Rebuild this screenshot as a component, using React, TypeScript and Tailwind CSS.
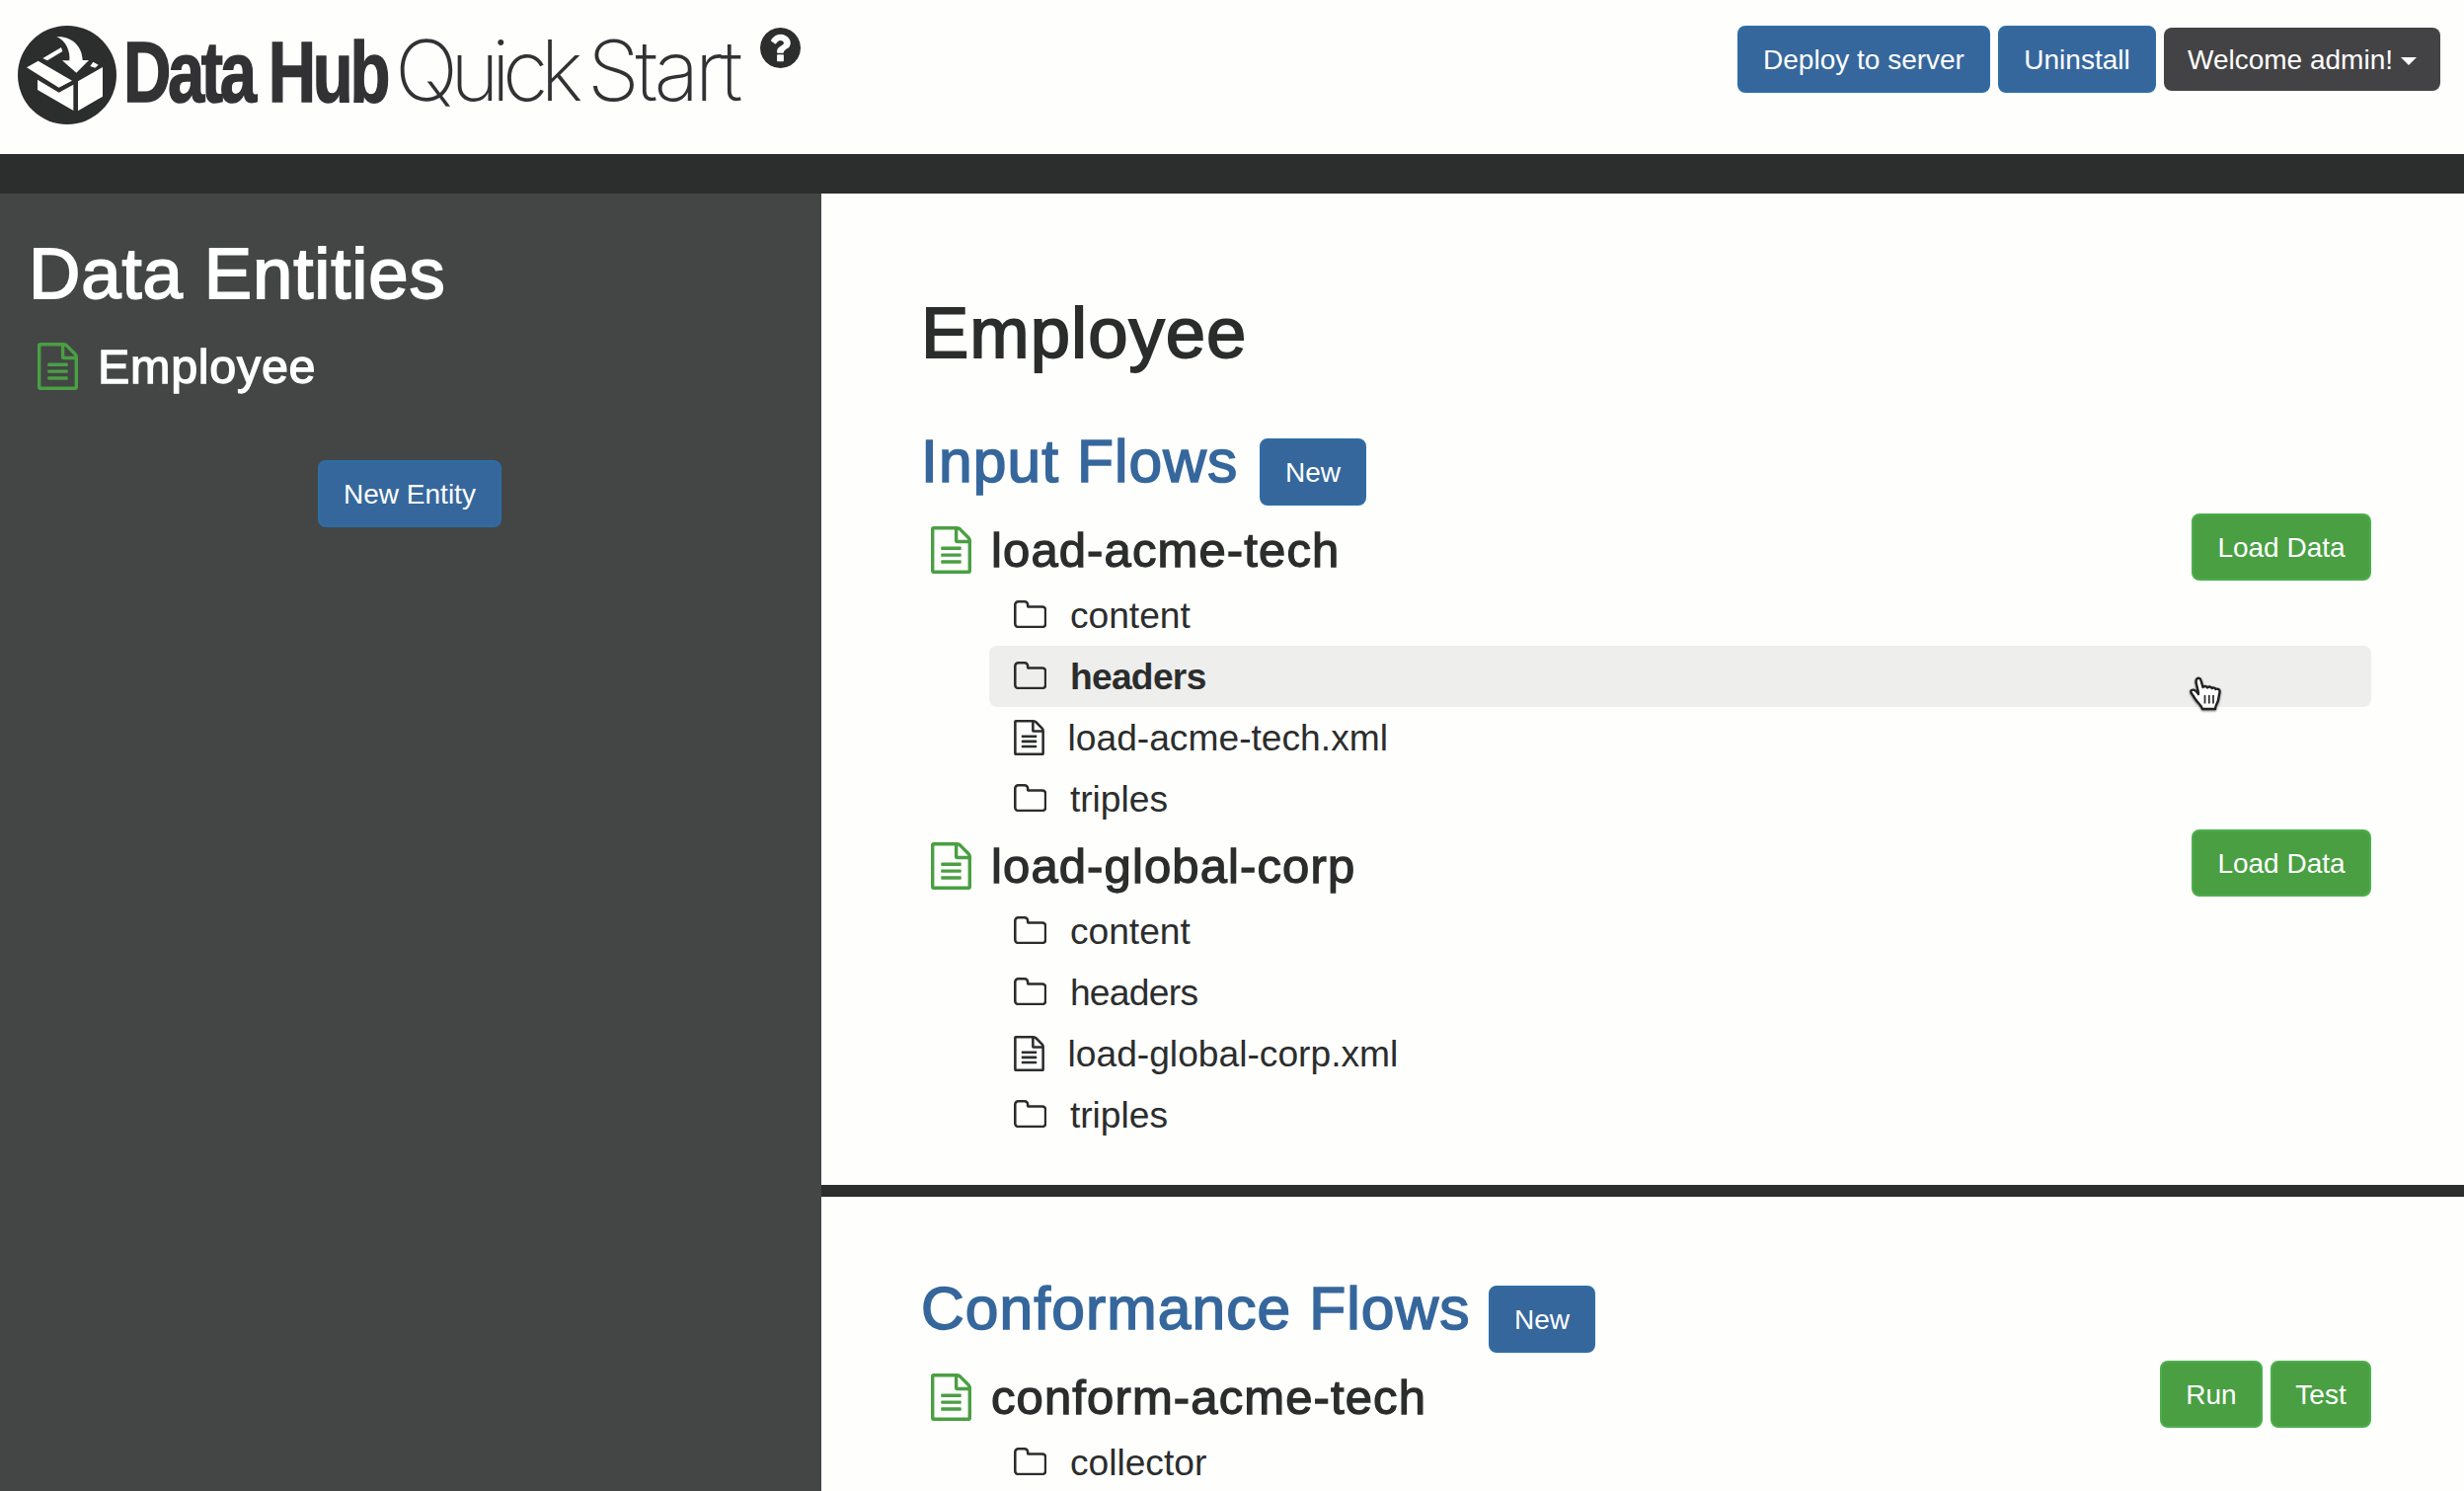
import type { ReactNode } from "react";

const FILE_PATH =
  "M1596 380q28 28 48 76t20 88v1152q0 40-28 68t-68 28h-1344q-40 0-68-28t-28-68v-1600q0-40 28-68t68-28h896q40 0 88 20t76 48zm-444-244v376h376q-10-29-22-41l-313-313q-12-12-41-22zm384 1528v-1024h-416q-40 0-68-28t-28-68v-416h-768v1536h1280zm-1024-864q0-14 9-23t23-9h704q14 0 23 9t9 23v64q0 14-9 23t-23 9h-704q-14 0-23-9t-9-23v-64zm736 224q14 0 23 9t9 23v64q0 14-9 23t-23 9h-704q-14 0-23-9t-9-23v-64q0-14 9-23t23-9h704zm0 256q14 0 23 9t9 23v64q0 14-9 23t-23 9h-704q-14 0-23-9t-9-23v-64q0-14 9-23t23-9h704z";
const FOLDER_PATH =
  "M1600 1312v-704q0-40-28-68t-68-28h-704q-40 0-68-28t-28-68v-64q0-40-28-68t-68-28h-320q-40 0-68 28t-28 68v960q0 40 28 68t68 28h1216q40 0 68-28t28-68zm128-704v704q0 92-66 158t-158 66h-1216q-92 0-158-66t-66-158v-960q0-92 66-158t158-66h320q92 0 158 66t66 158v32h672q92 0 158 66t66 158z";
const HELP_PATH =
  "M896 1376v-192q0-14-9-23t-23-9h-192q-14 0-23 9t-9 23v192q0 14 9 23t23 9h192q14 0 23-9t9-23zM1152 704q0-88-55.5-163t-138.5-116-170-41q-243 0-371 213-15 24 8 42l132 100q7 6 19 6 16 0 25-12 53-68 86-92 34-24 86-24 48 0 85.5 26t37.5 59q0 38-20 61t-68 45q-63 28-115.5 86.5t-52.5 125.5v36q0 14 9 23t23 9h192q14 0 23-9t9-23q0-19 21.5-49.5t54.5-49.5q32-18 49-28.5t46-35 44.5-48 28-60.5 12.5-81zM1536 896q0 209-103 385.5t-279.5 279.5-385.5 103-385.5-103-279.5-279.5-103-385.5 103-385.5 279.5-279.5 385.5-103 385.5 103 279.5 279.5 103 385.5z";

function FileIcon({ className }: { className: string }) {
  return (
    <svg viewBox="128 0 1536 1792" className={className} fill="currentColor">
      <path d={FILE_PATH} />
    </svg>
  );
}

function FolderIcon({ className }: { className: string }) {
  return (
    <svg viewBox="64 128 1664 1408" className={className} fill="currentColor">
      <path d={FOLDER_PATH} />
    </svg>
  );
}

function BoxLogo() {
  return (
    <svg viewBox="54 78 300 300" className="mt-[26px] ml-[18px] size-[100px] shrink-0">
      <circle cx="204" cy="228" r="150" fill="#2b2e2d" />
      <g fill="#fefefd">
        <path d="M172 112C214 108 250 138 251 183L270 183L232 221L189 184L211 184C214 158 202 124 172 112Z" />
        <path d="M130 177L186 144L190 156L144 184Z" />
        <path d="M81 205L116 185L219 245L179 266Z" />
        <path d="M114 242L179 281L223 257L223 336L114 273Z" />
        <path d="M237 247L312 204L312 293L237 337Z" />
        <path d="M274 201L283 188L299 197L289 206Z" />
      </g>
    </svg>
  );
}

function Pointer() {
  return (
    <svg viewBox="0 0 32 36" className="absolute top-[31px] right-[152px] h-[36px] w-[32px] drop-shadow-[0_1px_1px_rgba(0,0,0,0.5)]">
      <path
        d="M7 3C8.500 1 11 1.500 11.500 4L13.500 11C15 9.500 17 9.500 18 11.500C19.500 10 21.500 10 22.500 12C24 11 26 11.500 26.500 13C29 12 31 13.500 30.500 16L29 24C28.500 27 26 29 26 33L13 33C12 29 6 25 4 20C1.500 17 0.500 15 2 14C4 13 7 15 9 18C9 14 6.500 8 6.500 5Z"
        fill="#fff"
        stroke="#222"
        strokeWidth="2.4"
        strokeLinejoin="round"
      />
      <path d="M15.500 19v8.500M19.800 19v8.500M24 19v8.500" stroke="#333" strokeWidth="1.8" />
    </svg>
  );
}

function Button({ children, tone = "blue", className }: { children: ReactNode; tone?: "blue" | "green"; className: string }) {
  const color = tone === "blue" ? "bg-[#36679c] border-[#2e6da4]" : "bg-[#4a9f43] border-[#4cae4c]";
  return (
    <button className={`h-[68px] shrink-0 rounded-lg border-2 text-center text-[28px] leading-[65px] whitespace-nowrap text-white ${color} ${className}`}>
      {children}
    </button>
  );
}

function SectionTitle({ children, width }: { children: string; width: string }) {
  return (
    <div className="flex h-[90px] items-start">
      <h2
        className={`ml-px text-[60.500px] leading-[75px] tracking-[1.100px] whitespace-nowrap text-[#36679c] [-webkit-text-stroke:1.6px_#36679c] ${width}`}
      >
        {children}
      </h2>
      <Button className="mt-[14px] w-[108px]">New</Button>
    </div>
  );
}

type Entry = { name: string; kind: "folder" | "file"; active?: boolean; tight?: boolean };

function Flow({ name, entries, actions }: { name: string; entries: Entry[]; actions: ReactNode }) {
  return (
    <section>
      <div className="flex h-[72px] items-start">
        <FileIcon className="mt-[13px] ml-[11px] h-[48px] w-[41px] shrink-0 text-[#4a9f43]" />
        <h3 className="ml-[20px] grow text-[49px] leading-[75px] tracking-[1.120px] [-webkit-text-stroke:1.300px_#2b2d2d]">{name}</h3>
        <div className="flex gap-2">{actions}</div>
      </div>
      <ul className="ml-[70px]">
        {entries.map((e) => (
          <li
            key={e.name}
            className={`relative flex h-[62px] items-start rounded-lg pl-[24.500px] text-[37.200px] leading-[62.500px] ${e.active ? "bg-[#eeeeed] font-bold" : ""} ${e.tight ? "tracking-[-0.700px]" : ""}`}
          >
            {e.kind === "folder" ? (
              <FolderIcon className="mt-[16px] mr-[24px] h-[28.300px] w-[33.400px]" />
            ) : (
              <FileIcon className="mt-[13px] mr-[24px] h-[36px] w-[31px]" />
            )}
            {e.name}
            {e.active && <Pointer />}
          </li>
        ))}
      </ul>
    </section>
  );
}

export default function App() {
  return (
    <div className="flex h-[1510px] w-[2496px] flex-col overflow-hidden bg-[#fefefd] font-['Liberation_Sans',Arial,sans-serif] text-[#2b2d2d]">
      <header className="flex h-[156px] shrink-0 items-start">
        <BoxLogo />
        <div className="flex h-[156px] w-[700px] text-[#323234]">
          <span className="mt-[24px] ml-[7px] w-[275px] shrink-0 origin-left scale-x-[0.770] text-[87px] leading-[98px] font-bold tracking-[-4.400px] whitespace-nowrap [-webkit-text-stroke:1.5px_#323234]">
            Data Hub
          </span>
          <span className="mt-[22.500px] flex w-[370px] shrink-0 font-['Inter',sans-serif] text-[85px] leading-[98px] font-extralight whitespace-nowrap">
            <span className="w-[195px] tracking-[-8px]">Quick</span>
            <span className="tracking-[-4.500px]">Start</span>
          </span>
          <svg viewBox="0 128 1536 1536" className="mt-[28px] size-[41px] shrink-0 text-[#2b2e2d]" fill="currentColor">
            <path d={HELP_PATH} />
          </svg>
        </div>
        <div className="mt-[26px] mr-[24px] ml-auto flex gap-2">
          <Button className="w-[256px]">Deploy to server</Button>
          <Button className="w-[160px]">Uninstall</Button>
          <button className="mt-[2px] flex h-[64px] w-[280px] items-center justify-center gap-2 rounded-lg bg-[#434345] text-[28px] leading-[65px] whitespace-nowrap text-white">
            Welcome admin!
            <span className="mt-[4px] border-x-8 border-t-8 border-x-transparent border-t-white" />
          </button>
        </div>
      </header>
      <div className="h-[40px] shrink-0 bg-[#2b2e2d]" />
      <div className="flex min-h-0 grow">
        <aside className="w-[832px] shrink-0 bg-[#434645] pt-[43px] text-white">
          <h1 className="mb-[24px] ml-[29px] text-[72.500px] leading-[76px] tracking-[0.900px] [-webkit-text-stroke:1.8px_#fff]">Data Entities</h1>
          <div className="flex h-[62px] items-start">
            <FileIcon className="mt-[8px] ml-[38px] h-[48px] w-[41px] text-[#4a9f43]" />
            <span className="ml-[20px] text-[48.500px] leading-[65px] tracking-[0.700px] [-webkit-text-stroke:1.300px_#fff]">Employee</span>
          </div>
          <Button className="mt-[65px] ml-[322px] w-[186px]">New Entity</Button>
        </aside>
        <main className="grow">
          <div className="h-[1004px] pt-[103px] pr-[94px] pl-[100px]">
            <h1 className="mb-[55px] ml-px text-[72.500px] leading-[76px] tracking-[1px] [-webkit-text-stroke:1.8px_#2b2d2d]">Employee</h1>
            <SectionTitle width="w-[343px]">Input Flows</SectionTitle>
            <Flow
              name="load-acme-tech"
              actions={<Button tone="green" className="w-[182px]">Load Data</Button>}
              entries={[
                { name: "content", kind: "folder" },
                { name: "headers", kind: "folder", active: true, tight: true },
                { name: "load-acme-tech.xml", kind: "file" },
                { name: "triples", kind: "folder" },
              ]}
            />
            <Flow
              name="load-global-corp"
              actions={<Button tone="green" className="w-[182px]">Load Data</Button>}
              entries={[
                { name: "content", kind: "folder" },
                { name: "headers", kind: "folder", tight: true },
                { name: "load-global-corp.xml", kind: "file" },
                { name: "triples", kind: "folder" },
              ]}
            />
          </div>
          <div className="h-[12px] bg-[#2b2e2d]" />
          <div className="pt-[76px] pr-[94px] pl-[100px]">
            <SectionTitle width="w-[575px]">Conformance Flows</SectionTitle>
            <Flow
              name="conform-acme-tech"
              actions={
                <>
                  <Button tone="green" className="w-[104px]">Run</Button>
                  <Button tone="green" className="w-[102px]">Test</Button>
                </>
              }
              entries={[{ name: "collector", kind: "folder" }]}
            />
          </div>
        </main>
      </div>
    </div>
  );
}
